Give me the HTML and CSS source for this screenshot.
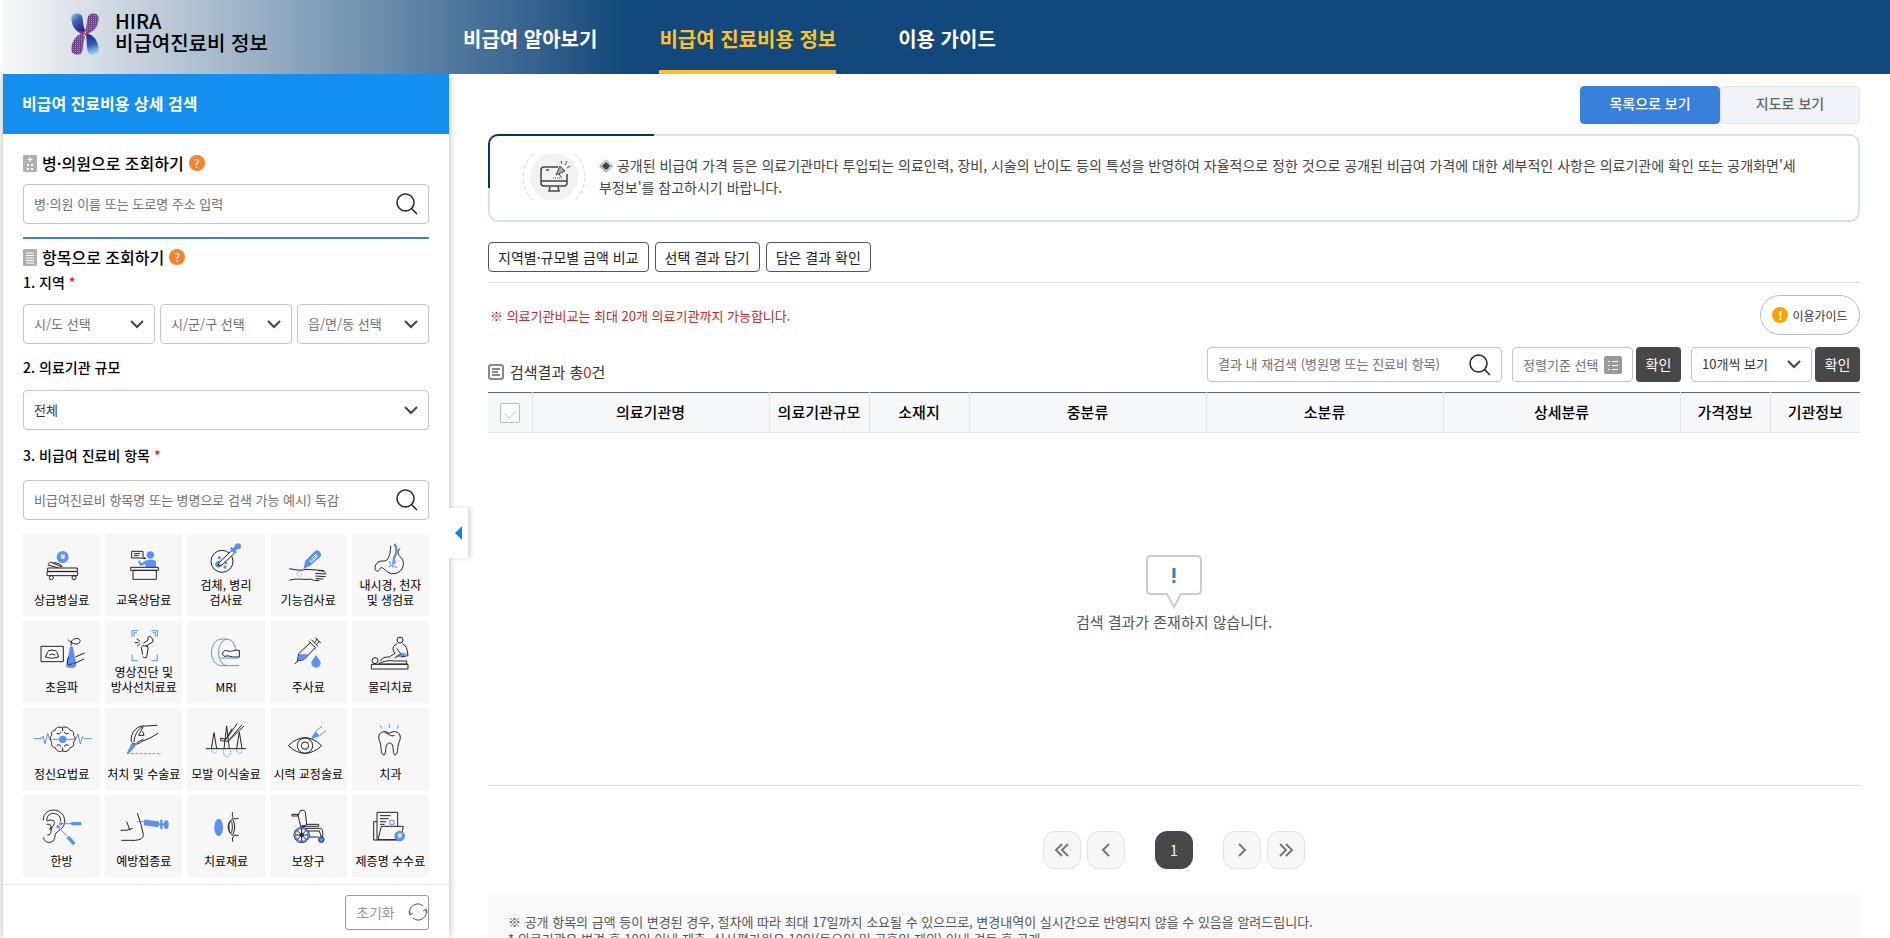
FILE: index.html
```html
<!DOCTYPE html>
<html lang="ko">
<head>
    <meta charset="UTF-8">
    <meta name="viewport" content="width=device-width, initial-scale=1.0">
    <title>HIRA 비급여진료비 정보</title>
    <link rel="stylesheet" href="styles.css">
</head>
<body>
    <header class="header">
        <a class="logo" href="#">
            <svg class="logo-mark" viewBox="0 0 84 126" aria-hidden="true">
                <defs>
                    <linearGradient id="lgTop" x1="0" y1="0" x2="0.6" y2="1">
                        <stop offset="0" stop-color="#8fd0ee"/><stop offset="0.45" stop-color="#3a5db5"/><stop offset="1" stop-color="#26208a"/>
                    </linearGradient>
                    <linearGradient id="lgBottom" x1="0.4" y1="0" x2="0.6" y2="1">
                        <stop offset="0" stop-color="#26208a"/><stop offset="0.5" stop-color="#3158b0"/><stop offset="1" stop-color="#9bdcf2"/>
                    </linearGradient>
                    <pattern id="dots" width="6" height="6" patternUnits="userSpaceOnUse">
                        <rect width="6" height="6" fill="#3a3f96"/><circle cx="2" cy="2" r="2" fill="#8aa6d8"/><circle cx="5" cy="5" r="1" fill="#d0436e"/>
                    </pattern>
                </defs>
                <path d="M1 14C1 0 24-2 31 6C38 14 34 38 42 50L38 64C14 58 1 38 1 14Z" fill="url(#lgTop)"/>
                <path d="M83 14C83 0 60-2 54 6C46 14 50 38 42 52L46 62C70 58 83 38 83 14Z" fill="url(#dots)"/>
                <path d="M1 110C1 126 24 128 31 120C38 112 34 88 42 74L36 60C14 66 1 86 1 110Z" fill="url(#dots)"/>
                <path d="M83 110C83 126 60 128 54 120C44 110 50 84 44 60C70 66 83 86 83 110Z" fill="url(#lgBottom)"/>
                <path d="M24 56Q40 56 44 66L56 54" fill="none" stroke="#c8325c" stroke-width="4"/>
            </svg>
            <span class="logo-text">HIRA<br>비급여진료비 정보</span>
        </a>
        <nav class="gnb">
            <a href="#">비급여 알아보기</a>
            <a href="#" class="on">비급여 진료비용 정보</a>
            <a href="#">이용 가이드</a>
        </nav>
    </header>

    <div class="wrap">
        <aside class="side">
            <h2 class="side-title">비급여 진료비용 상세 검색</h2>

            <form class="side-form">
                <div class="head">
                    <svg class="head-icon" viewBox="0 0 14 17" aria-hidden="true"><rect width="14" height="17" rx="1" fill="#b0b0b0"/><path d="M7 2v5M4.500 4.500h5" stroke="#fff"/><path d="M4 9h2v2H4zM8 9h2v2H8zM4 13h2v2H4zM8 13h2v2H8z" fill="#fff"/></svg>
                    <label for="hospital">병·의원으로 조회하기</label>
                    <button type="button" class="help">?</button>
                </div>
                <div class="search">
                    <input type="text" id="hospital" placeholder="병·의원 이름 또는 도로명 주소 입력">
                    <button type="button" aria-label="검색"><svg viewBox="0 0 22 22"><circle cx="9.500" cy="9.500" r="8.500"/><path d="M15.500 15.500L21 21"/></svg></button>
                </div>

                <div class="head head-item">
                    <svg class="head-icon" viewBox="0 0 14 17" aria-hidden="true"><rect width="14" height="17" rx="1" fill="#b0b0b0"/><path d="M3 4h8M3 6.500h8M3 9h8M3 11.500h8M3 14h8" stroke="#fff"/></svg>
                    <strong>항목으로 조회하기</strong>
                    <button type="button" class="help">?</button>
                </div>
                <p class="label label-area">1. 지역 <em>*</em></p>
                <div class="selects">
                    <select class="select" aria-label="시/도"><option>시/도 선택</option></select>
                    <select class="select" aria-label="시/군/구"><option>시/군/구 선택</option></select>
                    <select class="select" aria-label="읍/면/동"><option>읍/면/동 선택</option></select>
                </div>
                <label class="label" for="scale">2. 의료기관 규모</label>
                <select class="select select-dark" id="scale"><option>전체</option></select>
                <label class="label label-search" for="item">3. 비급여 진료비 항목 <em>*</em></label>
                <div class="search">
                    <input type="text" id="item" placeholder="비급여진료비 항목명 또는 병명으로 검색 가능 예시) 독감">
                    <button type="button" aria-label="검색"><svg viewBox="0 0 22 22"><circle cx="9.500" cy="9.500" r="8.500"/><path d="M15.500 15.500L21 21"/></svg></button>
                </div>

                <div class="cats">
                    <button type="button" class="cat">
                        <svg viewBox="0 0 180 108"><circle class="b" cx="92" cy="27" r="18"/><text x="92" y="34" class="won">₩</text><path d="M47 60h89v10H47zM45 71h92v12H45zM47 50l9-8 34 15c-4-10-12-12-26-13M80 60L48 51"/><circle cx="58" cy="89" r="6"/><circle cx="126" cy="89" r="6"/></svg>
                        상급병실료
                    </button>
                    <button type="button" class="cat">
                        <svg viewBox="0 0 180 108"><path d="M53 10h34v16l8 6-14-2H53zM60 17h18M60 23h14"/><circle class="b" cx="109" cy="21" r="11"/><path class="b" d="M76 36l6 10 12-8c12-4 28-4 32 2v18H94V48l-14 6-8-12z"/><path class="w" d="M50 58h83v9H50zM57 67h70v27H57z"/></svg>
                        교육상담료
                    </button>
                    <button type="button" class="cat two">
                        <svg viewBox="0 0 180 108"><circle cx="78" cy="61" r="33"/><circle class="b" cx="70" cy="50" r="5"/><circle class="b" cx="68" cy="70" r="10"/><circle class="b" cx="87" cy="78" r="5"/><circle class="b" cx="90" cy="66" r="4"/><path class="w" d="M66 74l4-10 38-36 8 8-38 36z"/><path class="bs" d="M104 20l16 16" stroke-width="7"/><path class="bs" d="M112 28l10-10" stroke-width="12"/><circle class="b" cx="126" cy="16" r="9"/></svg>
                        검체, 병리<br>검사료
                    </button>
                    <button type="button" class="cat">
                        <svg viewBox="0 0 180 108"><path d="M34 62q36 8 50 2l32 2 22 2M34 97c20-8 50 0 62-4q12 6 28 5M120 68q20 0 23 6M112 76l32 2M112 84l31 2M114 92l22 1"/><path class="b" d="M76 64l6-26 30-30q8-4 14 4t0 16L98 52z"/><path d="M96 36l16-16q8 0 4 8l-14 14q-8 0-6-6zM102 38l12-14" stroke="#fff"/><circle cx="64" cy="78" r="7" class="bn" stroke-dasharray="3 4"/></svg>
                        기능검사료
                    </button>
                    <button type="button" class="cat two">
                        <svg viewBox="0 0 180 108"><path d="M92 14c0 22-4 32-10 42-8 8-18 0-28 8-12 8-10 24-4 26 8 4 8-10 14-10 8 0 14 14 30 18 24 2 38-14 36-34-2-16-18-18-16-34l6-8"/><path class="bn" d="M104 8c8 16 8 26 0 38-4 8-2 16-4 22" stroke-width="7"/><path class="bn" d="M98 66v14M88 60l4 12M86 78l10-6M108 60l-6 10M102 76l10 4"/></svg>
                        내시경, 천자<br>및 생검료
                    </button>

                    <button type="button" class="cat">
                        <svg viewBox="0 0 180 108"><path d="M27 34h67v46H27zM48 48q12-6 26 0M48 50l-8 16q18 8 40 0l-6-16M52 60l8-3 10 3"/><path class="b" d="M112 48q0-14 6-14t7 14l7 36q2 14-6 14h-18q-8 0-5-10z"/><path d="M118 32c-8-24 30-28 26-12-4 12-24 8-36-6M130 66l28-12M110 66c-10 20 0 30 12 18M126 86l30-14"/></svg>
                        초음파
                    </button>
                    <button type="button" class="cat two">
                        <svg viewBox="0 0 180 108"><path class="bn" d="M54 26V8h18M112 8h18v18M130 80v18h-18M72 98H54V80M60 26V14h8M124 26V14h-8"/><path d="M86 80l-4-22q4-8 10-4 10-4 10 8l-4 26q-8 4-12-2M88 46l14-10q-2-14 8-10l8 10q-4 12-10 10l-12 10M68 32l10 8M62 44h12M70 54l8-6"/></svg>
                        영상진단 및<br>방사선치료료
                    </button>
                    <button type="button" class="cat">
                        <svg viewBox="0 0 180 108"><path class="bn" d="M92 12H78c-42 0-42 80 0 80h52M120 46C112-4 68 6 68 52c0 26 12 40 28 40"/><path class="w" d="M84 64c-10-8 0-22 12-16 12 4 14-4 34-2v20H110q-12-6-26-2z"/><path class="bn" d="M74 69h56"/></svg>
                        MRI
                    </button>
                    <button type="button" class="cat">
                        <svg viewBox="0 0 180 108"><path d="M50 87l12-12M112 8l16 16M118 12l-8 10M124 18l-8 10M100 14l20 20M92 18l22 22M98 22L62 56l-4 22 20-4 34-36"/><path class="b" d="M64 58h28L76 73l-17 4z"/><path class="b" d="M114 60c8 12 14 18 14 24a14 14 0 0 1-28 0c0-6 6-12 14-24z"/></svg>
                        주사료
                    </button>
                    <button type="button" class="cat">
                        <svg viewBox="0 0 180 108"><circle cx="120" cy="15" r="9"/><path class="b" d="M122 54l20 2-14 10h-20z"/><path d="M112 26q-16 6-12 22l6 6-18 12q-20-2-26 12M128 26q14 6 16 36l-20 4M110 40l12 16-18 14M56 86q20-12 50-8h34v9H56"/><circle cx="45" cy="77" r="9"/><path d="M34 88h110v14H34z"/></svg>
                        물리치료
                    </button>

                    <button type="button" class="cat">
                        <svg viewBox="0 0 180 108"><path class="bn" d="M5 50h22l6-8 6 24 8-32 5 16h80l6-14 7 30 6-22 5 6h23"/><path class="w" d="M88 17c-8-4-18 0-18 8-10 0-14 8-10 14-8 6-6 18 0 22-4 8 2 16 10 16 2 10 14 14 22 10 8 4 20 0 22-10 8 0 14-8 10-16 6-4 8-16 0-22 4-8-2-14-10-14-2-10-18-12-26-8z"/><path d="M74 34q8 6 14-4M110 34q-8 6-14-4M74 70q8-6 14 4M110 70q-8-6-14 4M92 17v10M92 87V77"/><path class="bn" d="M58 52h68"/><circle class="b" cx="92" cy="52" r="11"/></svg>
                        정신요법료
                    </button>
                    <button type="button" class="cat">
                        <svg viewBox="0 0 180 108"><path class="b" d="M38 94l14-28 10-4 2 10-16 20z"/><path d="M130 10l-34 2C70 8 48 32 52 58c6 12 22 10 32 0l24-10 24-14M60 60c0-18 14-42 26-46M88 14L74 40l16 0-4-12M68 62l20-10"/><path class="bn" d="M38 95h106" stroke-dasharray="8 5"/></svg>
                        처치 및 수술료
                    </button>
                    <button type="button" class="cat">
                        <svg viewBox="0 0 180 108"><path d="M30 80h120M46 80l8-48 8 48M84 80l8-68 8 68M122 80l8-50 8 50M74 48l16 4 34-48M74 56l22 2 42-50M74 48v8M90 52l18-32M96 58l48-46"/><path class="bn" d="M47 83c0 14 16 14 16 0M82 83c-2 28 24 28 22 0M122 83c0 14 16 14 16 0" stroke-dasharray="5 4"/></svg>
                        모발 이식술료
                    </button>
                    <button type="button" class="cat">
                        <svg viewBox="0 0 180 108"><path d="M31 71q50-48 100 0-50 46-100 0z"/><circle cx="81" cy="71" r="23"/><circle cx="81" cy="71" r="11"/><path class="bn" d="M88 63l14-14M114 28l18-16M126 40l18-14"/><path class="b" d="M98 52l14-24 14 14z"/></svg>
                        시력 교정술료
                    </button>
                    <button type="button" class="cat">
                        <svg viewBox="0 0 180 108"><path d="M88 34C68 20 50 36 58 56c8 14 2 44 14 43 6 0 4-26 8-30 4-8 14-8 17 0 4 6 1 30 8 30 10 0 6-28 14-43 8-20-10-36-31-22zM74 32c8 0 18 14 30 8"/><path class="bn" d="M60 10l5 10M88 6v12M116 10l-5 10"/></svg>
                        치과
                    </button>

                    <button type="button" class="cat">
                        <svg viewBox="0 0 180 108"><path d="M34 34C32-8 100-8 98 40c-2 22-24 24-28 36-2 12-4 24-18 24S34 88 34 84M44 34c0-30 44-26 42 2M44 36c14-6 28-2 22 10-2 10-10 8-12 16M44 46c12-2 18 4 8 16M46 78c16 0 8-14 14-22"/><path class="bn" d="M86 44h34M78 53l26 28"/><circle class="b" cx="86" cy="44" r="5"/><circle class="b" cx="78" cy="53" r="5"/><path class="bs" d="M118 44h30M107 84l20 21" stroke-width="10"/></svg>
                        한방
                    </button>
                    <button type="button" class="cat">
                        <svg viewBox="0 0 180 108"><path d="M70 12q12 34 18 64c0 12-8 16-24 18H22M20 64q20 2 36-6M38 38l10 26"/><path class="bn" d="M68 38h24"/><path class="bs" d="M90 40l44 6" stroke-width="17"/><path class="bs" d="M134 46h24M142 32v28" stroke-width="7"/><ellipse class="b" cx="157" cy="47" rx="7" ry="13"/></svg>
                        예방접종료
                    </button>
                    <button type="button" class="cat">
                        <svg viewBox="0 0 180 108"><ellipse class="b" cx="68" cy="55" rx="13" ry="26"/><path d="M110 10q-4 14 6 20l12-2M110 98q-4-12 6-20l12 2M110 28c-18 14-18 38 0 52M110 30q12 24 0 48"/><ellipse cx="104" cy="54" rx="5" ry="18"/></svg>
                        치료재료
                    </button>
                    <button type="button" class="cat">
                        <svg viewBox="0 0 180 108"><path d="M42 16h18v5H42zM60 18l8-14q12-2 14 4l4 40-18 4zM70 52h52v-6H86M84 58h44q8 2 6 26M84 66h40l6 18M92 84h30"/><circle class="w" cx="71" cy="78" r="23"/><circle cx="71" cy="78" r="20" class="bn" stroke-width="5"/><path d="M71 58v40M52 78h38M57 64l28 28M85 64L57 92"/><circle cx="71" cy="78" r="5"/><circle class="b" cx="130" cy="92" r="8"/><circle cx="130" cy="92" r="8"/></svg>
                        보장구
                    </button>
                    <button type="button" class="cat">
                        <svg viewBox="0 0 180 108"><path d="M51 92V10h62v42M41 94V38h10M60 20h32M60 29h26M60 38h18M60 46h14"/><path class="bn" d="M90 34h12v12H90z"/><path class="w" d="M54 92l10-40h66l-8 40zM41 93h80"/><circle class="b" cx="119" cy="81" r="16"/><text x="119" y="88" class="won">₩</text></svg>
                        제증명 수수료
                    </button>
                </div>

                <div class="side-foot">
                    <button type="reset" class="reset">초기화
                        <svg viewBox="0 0 20 20" aria-hidden="true"><path d="M2 12A8 8 0 0 1 15 4M18 8A8 8 0 0 1 5 16M1 9l1 4 3-2M19 11l-1-4-3 2"/></svg>
                    </button>
                </div>
            </form>
            <button type="button" class="fold" aria-label="접기"></button>
        </aside>

        <main class="main">
            <div class="view-tabs">
                <button type="button" class="on">목록으로 보기</button>
                <button type="button">지도로 보기</button>
            </div>

            <div class="notice">
                <svg class="notice-icon" viewBox="0 0 64 46" aria-hidden="true">
                    <circle cx="32" cy="23" r="24" fill="#f2f2f2"/>
                    <circle cx="32" cy="23" r="31" fill="none" stroke="#d5d5d5" stroke-dasharray="4 3"/>
                    <path d="M36 13H22q-3 0-3 3v13q0 3 3 3h20q3 0 3-3v-9M19 27h26M28 33l-1 4h10l-1-4M24 16h3" fill="none" stroke="#444" stroke-width="1.500"/>
                    <path d="M31 24h10" stroke="#444" stroke-dasharray="1 1"/>
                    <path d="M34 21l4-9 5 5zM37 20l2 3M40 10l-1-3M43 11l2-4M45 14l3-2" fill="#aaa" stroke="#444"/>
                </svg>
                <p>◈ 공개된 비급여 가격 등은 의료기관마다 투입되는 의료인력, 장비, 시술의 난이도 등의 특성을 반영하여 자율적으로 정한 것으로 공개된 비급여 가격에 대한 세부적인 사항은 의료기관에 확인 또는 공개화면'세<br>부정보'를 참고하시기 바랍니다.</p>
            </div>

            <div class="actions">
                <button type="button">지역별·규모별 금액 비교</button>
                <button type="button">선택 결과 담기</button>
                <button type="button">담은 결과 확인</button>
            </div>

            <div class="info">
                <p>※ 의료기관비교는 최대 20개 의료기관까지 가능합니다.</p>
                <button type="button" class="guide"><span>!</span>이용가이드</button>
            </div>

            <div class="toolbar">
                <p class="total">
                    <svg viewBox="0 0 16 16" aria-hidden="true"><rect x="1" y="1" width="14" height="14" rx="2"/><path d="M4 5h8M4 8h6M4 11h8"/></svg>
                    <span>검색결과 총<em>0</em>건</span>
                </p>
                <div class="search search-result">
                    <input type="text" aria-label="결과 내 재검색" placeholder="결과 내 재검색 (병원명 또는 진료비 항목)">
                    <button type="button" aria-label="검색"><svg viewBox="0 0 22 22"><circle cx="9.500" cy="9.500" r="8.500"/><path d="M15.500 15.500L21 21"/></svg></button>
                </div>
                <div class="pair">
                    <button type="button" class="sort">정렬기준 선택
                        <svg viewBox="0 0 18 18" aria-hidden="true"><rect width="18" height="18" rx="2" fill="#999"/><path d="M4 5.500h2M8 5.500h6M4 9.500h2M8 9.500h6M4 13.500h2M8 13.500h6" stroke="#fff"/></svg>
                    </button>
                    <button type="button" class="ok">확인</button>
                </div>
                <div class="pair">
                    <select class="select select-dark select-count" aria-label="보기 개수"><option>10개씩 보기</option></select>
                    <button type="button" class="ok">확인</button>
                </div>
            </div>

            <table class="list">
                <colgroup>
                    <col class="c-check"><col><col class="c-size"><col class="c-size"><col><col><col><col class="c-info"><col class="c-info">
                </colgroup>
                <thead>
                    <tr>
                        <th><input type="checkbox" aria-label="전체 선택"></th>
                        <th>의료기관명</th>
                        <th>의료기관규모</th>
                        <th>소재지</th>
                        <th>중분류</th>
                        <th>소분류</th>
                        <th>상세분류</th>
                        <th>가격정보</th>
                        <th>기관정보</th>
                    </tr>
                </thead>
                <tbody>
                    <tr>
                        <td colspan="9">
                            <svg class="bubble" viewBox="0 0 56 54" aria-hidden="true"><path d="M5 1h46q4 0 4 4v30q0 4-4 4H35l-7 13-7-13H5q-4 0-4-4V5q0-4 4-4z" fill="#fff" stroke="#ccc" stroke-width="2"/><path d="M28 13v10M28 25v3" stroke="#3d7cc4" stroke-width="3"/></svg>
                            <p>검색 결과가 존재하지 않습니다.</p>
                        </td>
                    </tr>
                </tbody>
            </table>

            <nav class="paging" aria-label="페이지">
                <a href="#" aria-label="처음"><svg viewBox="0 0 16 14"><path d="M8 1L2 7l6 6M14 1L8 7l6 6"/></svg></a>
                <a href="#" aria-label="이전"><svg viewBox="0 0 16 14"><path d="M11 1L5 7l6 6"/></svg></a>
                <a href="#" class="on">1</a>
                <a href="#" aria-label="다음"><svg viewBox="0 0 16 14"><path d="M5 1l6 6-6 6"/></svg></a>
                <a href="#" aria-label="마지막"><svg viewBox="0 0 16 14"><path d="M2 1l6 6-6 6M8 1l6 6-6 6"/></svg></a>
            </nav>

            <div class="remark">
                <p>※ 공개 항목의 금액 등이 변경된 경우, 절차에 따라 최대 17일까지 소요될 수 있으므로, 변경내역이 실시간으로 반영되지 않을 수 있음을 알려드립니다.</p>
                <p>* 의료기관은 변경 후 10일 이내 제출, 심사평가원은 10일(토요일 및 공휴일 제외) 이내 검토 후 공개</p>
            </div>
        </main>
    </div>
</body>
</html>
```

FILE: styles.css
```css
* {
    box-sizing: border-box;
    margin: 0;
    padding: 0;
}
body {
    height: 100vh;
    padding-left: 3px;
    overflow: hidden;
    display: flex;
    flex-direction: column;
    background: #fff;
    color: #000;
    font-family: "Noto Sans CJK KR", sans-serif;
    font-size: 14px;
}
button, input, select {
    font-family: inherit;
    font-size: 13px;
    color: inherit;
}
button {
    background: none;
    border: none;
    cursor: pointer;
}
a {
    color: inherit;
    text-decoration: none;
}
em {
    font-style: normal;
    color: #d22;
}

/* header */
.header {
    position: relative;
    z-index: 1;
    flex: none;
    height: 74px;
    display: flex;
    background: linear-gradient(to right, #f7f7f7, #12487b 33%);
}
.logo {
    width: 460px;
    padding: 10px 0 0 68px;
    display: flex;
    align-items: flex-start;
    gap: 16px;
}
.logo-mark {
    width: 28px;
    height: 42px;
    margin-top: 3px;
}
.logo-text {
    font-size: 20px;
    line-height: 22px;
    font-weight: 500;
}
.gnb {
    display: flex;
    gap: 62px;
    color: #fff;
    font-size: 20px;
    font-weight: 700;
}
.gnb a {
    padding-top: 8px;
    line-height: 62px;
    border-bottom: 4px solid transparent;
}
.gnb .on {
    color: #ffc226;
    border-color: #ffc226;
}

/* sidebar */
.wrap {
    flex: 1;
    display: flex;
    min-height: 0;
}
.side {
    position: relative;
    flex: none;
    width: 446px;
    background: #fff;
    box-shadow: 0 0 8px rgba(0, 0, 0, 0.3);
}
.side-title {
    height: 60px;
    padding-left: 19px;
    line-height: 58px;
    background: #158fef;
    color: #fff;
    font-size: 16px;
}
.side-form {
    padding: 16px 20px 0;
}
.head {
    height: 26px;
    margin-bottom: 8px;
    display: flex;
    align-items: center;
    gap: 5px;
    font-size: 16px;
    line-height: 24px;
    font-weight: 500;
}
.head strong {
    font-weight: 500;
}
.head-item {
    height: 33px;
    margin: 13px 0 0;
    border-top: 2px solid #3a86c3;
    padding-top: 5px;
}
.head-icon {
    width: 14px;
    height: 17px;
}
.help {
    width: 16px;
    height: 16px;
    border-radius: 50%;
    background: #fb812a;
    color: #fff;
    font-size: 12px;
    line-height: 16px;
    font-weight: 500;
}
.search {
    height: 40px;
    display: flex;
    align-items: center;
    border: 1px solid #c5c5c5;
    border-radius: 4px;
    background: #fff;
}
.search input {
    flex: 1;
    min-width: 0;
    padding: 0 0 2px 10px;
    border: none;
    outline: none;
}
.search input::placeholder {
    color: #707070;
}
.search button {
    width: 42px;
    height: 22px;
}
.search svg {
    width: 22px;
    height: 22px;
    fill: none;
    stroke: #222;
    stroke-width: 1.5;
}
.label {
    display: block;
    padding: 11px 0;
    font-size: 14px;
    line-height: 24px;
    font-weight: 500;
}
.label-area {
    padding: 0 0 10px;
}
.label-search {
    padding: 13px 0;
}
.selects {
    display: grid;
    grid-template-columns: repeat(3, 1fr);
    gap: 5px;
}
.select {
    appearance: none;
    width: 100%;
    height: 40px;
    padding: 0 0 2px 10px;
    border: 1px solid #c5c5c5;
    border-radius: 4px;
    color: #707070;
    background: #fff url("data:image/svg+xml,%3Csvg xmlns='http://www.w3.org/2000/svg' width='14' height='9'%3E%3Cpath d='M1 1l6 6 6-6' fill='none' stroke='%23444' stroke-width='2'/%3E%3C/svg%3E") no-repeat right 10px center;
}
.select-dark {
    color: #333;
}
.cats {
    margin-top: 14px;
    display: grid;
    grid-template-columns: repeat(5, 1fr);
    gap: 5px;
}
.cat {
    display: block;
    height: 82px;
    padding: 14px 0 9px;
    background: #f7f7f7;
    font-size: 12px;
    line-height: 15px;
    white-space: nowrap;
    text-align: center;
}
.cat.two {
    padding-top: 7px;
}
.cat svg {
    display: block;
    width: 60px;
    height: 36px;
    margin: 0 auto 8px;
    overflow: visible;
    fill: none;
    stroke: #222;
    stroke-width: 3;
}
.cat.two svg {
    margin-bottom: 0;
}
.cat .w {
    fill: #f7f7f7;
}
.cat .b {
    fill: #5b8ff9;
    stroke: none;
}
.cat .bn, .cat .bs {
    stroke: #5b8ff9;
}
.cat .won {
    fill: #fff;
    stroke: none;
    font-size: 20px;
    font-weight: 700;
    text-anchor: middle;
}
.side-foot {
    margin: 7px -20px 0;
    padding: 10px 20px;
    border-top: 1px solid #e5e5e5;
    display: flex;
    justify-content: flex-end;
}
.reset {
    width: 84px;
    height: 35px;
    padding: 0 0 2px 10px;
    display: flex;
    align-items: center;
    justify-content: space-between;
    border: 1px solid #999;
    border-radius: 3px;
    color: #999;
    font-size: 14px;
}
.reset svg {
    width: 20px;
    height: 20px;
    fill: none;
    stroke: #555;
}
.fold {
    position: absolute;
    left: 100%;
    top: 434px;
    width: 19px;
    height: 50px;
    background: #fff;
    box-shadow: 3px 0 4px rgba(0, 0, 0, 0.15);
}
.fold::before {
    content: "";
    display: block;
    margin-left: 6px;
    width: 0;
    border: 7px solid transparent;
    border-left: none;
    border-right-color: #0c83ea;
}

/* result */
.main {
    flex: 1;
    min-width: 0;
    padding: 12px 30px 0 39px;
}
.view-tabs {
    display: flex;
    justify-content: flex-end;
}
.view-tabs button {
    width: 140px;
    height: 38px;
    padding-bottom: 4px;
    border: 1px solid #e1e6ea;
    border-radius: 4px;
    background: #eff3f7;
    color: #666;
    font-size: 14px;
    font-weight: 500;
}
.view-tabs .on {
    border-color: #3880db;
    background: #3880db;
    color: #fff;
}
.notice {
    position: relative;
    height: 88px;
    margin: 10px 0 20px;
    padding: 18px 30px 0 32px;
    display: flex;
    align-items: flex-start;
    gap: 13px;
    border: 2px solid #dce1e4;
    border-radius: 10px;
    color: #444;
    line-height: 22px;
}
.notice::before {
    content: "";
    position: absolute;
    left: -2px;
    top: -2px;
    width: 164px;
    height: 52px;
    border: solid #14305c;
    border-width: 2px 0 0 2px;
    border-radius: 10px 0 0 0;
}
.notice-icon {
    flex: none;
    width: 64px;
    height: 46px;
}
.actions {
    padding-bottom: 10px;
    display: flex;
    gap: 6px;
    border-bottom: 1px solid #e3e3e3;
}
.actions button {
    height: 30px;
    padding: 0 9px;
    border: 1px solid #555;
    border-radius: 4px;
    color: #222;
    font-size: 14px;
    line-height: 26px;
}
.info {
    margin: 12px 0;
    padding-left: 2px;
    display: flex;
    align-items: center;
    justify-content: space-between;
    color: #c22a2a;
    font-size: 13px;
}
.guide {
    width: 100px;
    height: 40px;
    display: flex;
    align-items: center;
    justify-content: center;
    gap: 4px;
    border: 1px solid #bbb;
    border-radius: 20px;
    color: #333;
    font-size: 12px;
}
.guide span {
    width: 16px;
    height: 16px;
    border-radius: 50%;
    background: #ffa200;
    color: #fff;
    line-height: 16px;
    font-weight: 700;
}
.toolbar {
    display: flex;
    gap: 10px;
    margin-bottom: 10px;
}
.total {
    flex: 1;
    display: flex;
    align-items: center;
    gap: 6px;
    padding-top: 14px;
    font-size: 15px;
    line-height: 20px;
    color: #333;
}
.total svg {
    width: 16px;
    height: 16px;
    fill: none;
    stroke: #888;
    stroke-width: 2;
}
.search-result {
    width: 295px;
    height: 35px;
}
.pair {
    display: flex;
    gap: 3px;
}
.sort {
    width: 121px;
    height: 35px;
    padding: 0 10px;
    display: flex;
    align-items: center;
    justify-content: space-between;
    border: 1px solid #c5c5c5;
    border-radius: 4px;
    color: #707070;
    white-space: nowrap;
}
.sort svg {
    width: 18px;
    height: 18px;
}
.select-count {
    width: 121px;
    height: 35px;
}
.ok {
    width: 45px;
    height: 35px;
    padding-bottom: 2px;
    border-radius: 4px;
    background: #474749;
    color: #fff;
    font-size: 14px;
}
.list {
    width: 100%;
    table-layout: fixed;
    border-collapse: collapse;
    border-top: 1px solid #666;
    border-bottom: 1px solid #e0e0e0;
}
.c-check {
    width: 44px;
}
.c-size {
    width: 100px;
}
.c-info {
    width: 90px;
}
.list th {
    height: 40px;
    padding-bottom: 2px;
    border-left: 1px solid #e3e6e9;
    border-bottom: 1px solid #e3e6e9;
    background: #f6f8fa;
    font-size: 15px;
    font-weight: 500;
    line-height: 20px;
}
.list th:first-child {
    border-left: none;
}
.list input {
    appearance: none;
    display: block;
    width: 20px;
    height: 20px;
    margin: 2px auto 0;
    border: 1px solid #bbb;
    border-radius: 2px;
    background: #fff;
}
.list input::before {
    content: "";
    display: block;
    width: 10px;
    height: 6px;
    margin: 5px 4px;
    border: solid #ccc;
    border-width: 0 0 1px 1px;
    transform: rotate(-45deg);
}
.list td {
    height: 353px;
    padding-bottom: 30px;
    text-align: center;
    vertical-align: middle;
    color: #555;
    font-size: 15px;
    line-height: 22px;
}
.bubble {
    display: block;
    width: 56px;
    height: 54px;
    margin: 0 auto 2px;
}
.paging {
    margin: 45px 0 26px;
    display: flex;
    justify-content: center;
    gap: 6px;
}
.paging a {
    width: 38px;
    height: 38px;
    display: flex;
    align-items: center;
    justify-content: center;
    border: 1px solid #e3e3e3;
    border-radius: 12px;
    background: #f7f7f7;
}
.paging svg {
    width: 16px;
    height: 14px;
    fill: none;
    stroke: #777;
    stroke-width: 2;
}
.paging .on {
    margin: 0 24px;
    border-color: #474749;
    background: #474749;
    color: #fff;
}
.remark {
    padding: 18px 20px;
    background: #fafafa;
    color: #555;
    font-size: 13px;
    line-height: 17px;
}
```
